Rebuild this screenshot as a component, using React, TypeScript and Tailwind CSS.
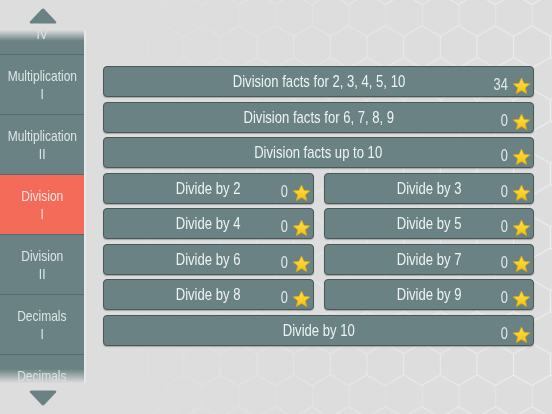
import React from "react";

const FONT = '"Liberation Sans", Arial, sans-serif';

const sideItems = [
  { title: "Subtraction", level: "IV" },
  { title: "Multiplication", level: "I" },
  { title: "Multiplication", level: "II" },
  { title: "Division", level: "I", active: true },
  { title: "Division", level: "II" },
  { title: "Decimals", level: "I" },
  { title: "Decimals", level: "II" },
];

type Row = { label: string; count: number }[];

const rows: Row[] = [
  [{ label: "Division facts for 2, 3, 4, 5, 10", count: 34 }],
  [{ label: "Division facts for 6, 7, 8, 9", count: 0 }],
  [{ label: "Division facts up to 10", count: 0 }],
  [
    { label: "Divide by 2", count: 0 },
    { label: "Divide by 3", count: 0 },
  ],
  [
    { label: "Divide by 4", count: 0 },
    { label: "Divide by 5", count: 0 },
  ],
  [
    { label: "Divide by 6", count: 0 },
    { label: "Divide by 7", count: 0 },
  ],
  [
    { label: "Divide by 8", count: 0 },
    { label: "Divide by 9", count: 0 },
  ],
  [{ label: "Divide by 10", count: 0 }],
];

function Star() {
  return (
    <svg width="19" height="18" viewBox="0 0 24 23" className="shrink-0">
      <defs>
        <linearGradient id="starFill" x1="0" y1="0" x2="0" y2="1">
          <stop offset="0" stopColor="#fde44a" />
          <stop offset="1" stopColor="#f2c10f" />
        </linearGradient>
      </defs>
      <path
        d="M12 1.2 L15.1 8.1 L22.6 8.8 L16.9 13.8 L18.6 21.2 L12 17.3 L5.4 21.2 L7.1 13.8 L1.4 8.8 L8.9 8.1 Z"
        fill="url(#starFill)"
        stroke="#e2a514"
        strokeWidth="1"
        strokeLinejoin="round"
      />
    </svg>
  );
}

function LessonButton({ label, count }: { label: string; count: number }) {
  return (
    <div className="relative flex h-[31px] items-center justify-center rounded-[4px] border border-[#4b5858] bg-[#6a8283] shadow-[0_1px_1px_rgba(0,0,0,0.25)]">
      <span className="inline-block scale-x-[0.77] whitespace-nowrap text-[17px] leading-none text-[#eef3f3]">
        {label}
      </span>
      <span className="absolute bottom-[1px] right-[2px] flex items-end gap-[4px]">
        <span className="mb-[2px] inline-block origin-right scale-x-[0.8] text-[16px] leading-none text-[#e4eaea]">
          {count}
        </span>
        <Star />
      </span>
    </div>
  );
}

function Arrow({ down }: { down?: boolean }) {
  return (
    <svg width="28" height="16" viewBox="0 0 28 16" className={down ? "rotate-180" : ""}>
      <path d="M12.6 1.2 Q14 0 15.4 1.2 L27 13.5 Q28 15.5 25.5 15.5 L2.5 15.5 Q0 15.5 1 13.5 Z" fill="#6a8283" />
    </svg>
  );
}

function HexBackground() {
  return (
    <svg className="absolute inset-0" width="552" height="414">
      <defs>
        <pattern id="hex" width="36.66" height="63.5" patternUnits="userSpaceOnUse" x="18.7" y="-6">
          <path
            d="M0 10.58 L18.33 0 L36.66 10.58 M0 10.58 V31.75 L18.33 42.33 L36.66 31.75 M18.33 42.33 V63.5"
            fill="none"
            stroke="#ffffff"
            strokeWidth="1"
          />
        </pattern>
        <linearGradient id="hexFade" x1="0" y1="0" x2="1" y2="0">
          <stop offset="0.15" stopColor="#fff" stopOpacity="0" />
          <stop offset="1" stopColor="#fff" stopOpacity="1" />
        </linearGradient>
        <mask id="hexMask">
          <rect width="552" height="414" fill="url(#hexFade)" />
        </mask>
      </defs>
      <rect width="552" height="414" fill="url(#hex)" opacity="0.55" mask="url(#hexMask)" />
    </svg>
  );
}

export default function App() {
  return (
    <div
      className="relative flex h-[414px] w-[552px] overflow-hidden bg-[#dcdddc]"
      style={{ fontFamily: FONT }}
    >
      <HexBackground />

      {/* Sidebar */}
      <div className="relative flex w-[86px] shrink-0 flex-col">
        <div className="flex h-[30px] items-start justify-center pt-[8px]">
          <Arrow />
        </div>
        <div className="relative h-[353px] overflow-hidden border-r-2 border-[#e6e7e6] bg-[#6a8283]">
          <div className="-mt-[35px] flex flex-col">
            {sideItems.map((item, i) => (
              <div
                key={i}
                className={`flex h-[60px] flex-col items-center justify-center border-b border-[#566b6c] text-[15px] leading-[18px] ${
                  item.active ? "bg-[#f46b5a] text-[#fde3de]" : "text-[#dde6e6]"
                }`}
              >
                <span className="inline-block scale-x-[0.8] whitespace-nowrap">{item.title}</span>
                <span className="inline-block scale-x-[0.8]">{item.level}</span>
              </div>
            ))}
          </div>
          <div className="absolute inset-x-0 top-0 h-[11px] bg-gradient-to-b from-[#dcdddc] to-transparent" />
          <div className="absolute inset-x-0 bottom-0 h-[14px] bg-gradient-to-t from-[#dcdddc] to-transparent" />
        </div>
        <div className="flex flex-1 items-start justify-center pt-[7px]">
          <Arrow down />
        </div>
      </div>

      {/* Lessons */}
      <div className="relative flex flex-1 flex-col gap-[4.5px] pl-[17px] pr-[18px] pt-[66px]">
        {rows.map((row, i) => (
          <div key={i} className={row.length > 1 ? "grid grid-cols-2 gap-[10px]" : "flex flex-col"}>
            {row.map((b) => (
              <LessonButton key={b.label} label={b.label} count={b.count} />
            ))}
          </div>
        ))}
      </div>
    </div>
  );
}
